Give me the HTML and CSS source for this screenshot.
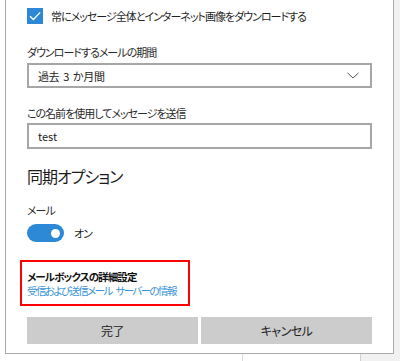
FILE: index.html
```html
<!DOCTYPE html>
<html lang="ja">
<head>
    <meta charset="UTF-8">
    <meta name="viewport" content="width=device-width, initial-scale=1.0">
    <title>アカウントの設定</title>
    <link rel="stylesheet" href="styles.css">
</head>
<body>
    <div class="screen">
        <div class="dialog">
            <label class="check-row">
                <span class="checkbox">
                    <svg width="16" height="16" viewBox="0 0 16 16">
                        <path d="M3 8.2 L6.4 11.5 L13.2 4.4" fill="none" stroke="#fff" stroke-width="1.3"/>
                    </svg>
                </span>
                <span class="check-text">常にメッセージ全体とインターネット画像をダウンロードする</span>
            </label>

            <div class="field-label label-period">ダウンロードするメールの期間</div>
            <div class="select">
                <span>過去 3 か月間</span>
                <svg class="chevron" width="12" height="7" viewBox="0 0 12 7">
                    <path d="M0.5 0.8 L6 6 L11.5 0.8" fill="none" stroke="#555" stroke-width="1"/>
                </svg>
            </div>

            <div class="field-label label-name">この名前を使用してメッセージを送信</div>
            <div class="textbox">test</div>

            <h2 class="section-title">同期オプション</h2>

            <div class="field-label label-mail">メール</div>
            <div class="toggle-row">
                <span class="toggle"><span class="knob"></span></span>
                <span class="toggle-text">オン</span>
            </div>

            <div class="advanced">
                <div class="advanced-title">メールボックスの詳細設定</div>
                <a class="advanced-link" href="#">受信および送信メール サーバーの情報</a>
            </div>

            <div class="buttons">
                <button class="btn">完了</button>
                <button class="btn">キャンセル</button>
            </div>
        </div>
        <div class="side"></div>
    </div>
    <div class="under">
        <div class="under-left"></div>
        <div class="under-mid"></div>
        <div class="under-right"></div>
    </div>
</body>
</html>
```

FILE: styles.css
```css
* {
    margin: 0;
    padding: 0;
    box-sizing: border-box;
}

body {
    width: 400px;
    height: 361px;
    overflow: hidden;
    background: #fff;
    color: #1f1f1f;
    font-family: "Noto Sans CJK JP", "Noto Sans", sans-serif;
    font-feature-settings: "palt" 1;
    font-size: 11px;
    letter-spacing: -1px;
}

.screen {
    display: flex;
    height: 354px;
}

.dialog {
    margin-left: 5px;
    width: 389px;
    height: 354px;
    border: 1px solid #ababab;
    border-top: none;
    padding: 8px 21px 0 21px;
    display: flex;
    flex-direction: column;
    align-items: stretch;
}

.side {
    flex: 1;
    background: #f1f1f1;
}

/* strip under the dialog */
.under {
    display: flex;
    height: 7px;
}

.under-left {
    width: 242px;
}

.under-mid {
    width: 118px;
    border-left: 1px solid #dcdcdc;
}

.under-right {
    flex: 1;
    background: #f1f1f1;
    border-left: 1px solid #d0d0d0;
}

/* checkbox */
.check-row {
    display: flex;
    align-items: center;
    gap: 8px;
    height: 16px;
}

.checkbox {
    width: 16px;
    height: 16px;
    background: #2d89d6;
    display: flex;
}

.check-text {
    line-height: 16px;
    white-space: nowrap;
}

.field-label {
    line-height: 16px;
    color: #2a2a2a;
}

.label-period {
    margin-top: 20px;
}

.label-name {
    margin-top: 17px;
}

.label-mail {
    margin-top: 15px;
}

.select,
.textbox {
    border: 2px solid #a6a6a6;
    display: flex;
    align-items: center;
    padding: 0 9px;
    color: #222;
}

.select {
    margin-top: 3px;
    height: 25px;
    justify-content: space-between;
    letter-spacing: -0.4px;
    word-spacing: 2px;
}

.chevron {
    margin-right: 2px;
}

.textbox {
    margin-top: 2px;
    height: 26px;
    letter-spacing: 0;
}

.section-title {
    margin-top: 16px;
    font-size: 16px;
    font-weight: 400;
    line-height: 22px;
    color: #1a1a1a;
}

/* toggle switch */
.toggle-row {
    margin-top: 6px;
    display: flex;
    align-items: center;
    gap: 10px;
    height: 18px;
}

.toggle {
    width: 37px;
    height: 18px;
    border-radius: 9px;
    background: #2d89d6;
    display: flex;
    align-items: center;
    justify-content: flex-end;
    padding-right: 4px;
}

.knob {
    width: 9px;
    height: 9px;
    border-radius: 50%;
    background: #fff;
}

/* highlighted advanced settings */
.advanced {
    margin-top: 18px;
    margin-left: -7px;
    width: 170px;
    height: 46px;
    border: 2px solid #f00;
    padding: 7px 0 0 5px;
    font-size: 10.5px;
}

.advanced-title {
    font-weight: 700;
    line-height: 15px;
    letter-spacing: -0.9px;
    color: #111;
    white-space: nowrap;
}

.advanced-link {
    display: block;
    line-height: 14px;
    letter-spacing: -1.6px;
    word-spacing: 3px;
    color: #3993d6;
    text-decoration: none;
    white-space: nowrap;
}

.buttons {
    margin-top: 11px;
    display: grid;
    grid-template-columns: 1fr 1fr;
    gap: 3px;
}

.btn {
    height: 27px;
    border: none;
    background: #cccccc;
    color: #222;
    font-family: inherit;
    font-feature-settings: "palt" 1;
    font-size: 12px;
    letter-spacing: -0.5px;
}
```
